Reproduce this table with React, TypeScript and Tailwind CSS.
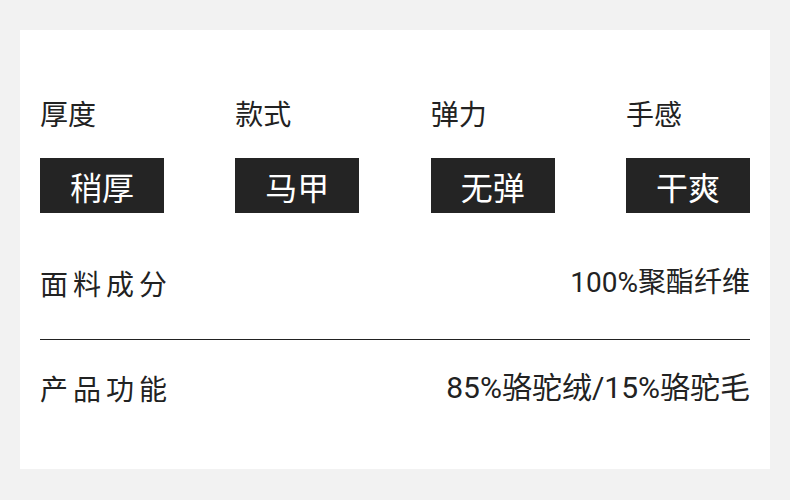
import React from 'react';

const specs = [
  { label: '厚度', value: '稍厚' },
  { label: '款式', value: '马甲' },
  { label: '弹力', value: '无弹' },
  { label: '手感', value: '干爽' },
];

const App: React.FC = () => {
  return (
    <div
      className="w-[790px] h-[500px] bg-[#f2f2f2] pt-[30px] px-[20px] text-[#222]"
      style={{ fontFamily: '"Noto Sans CJK SC", "Noto Sans", sans-serif' }}
    >
      <div className="bg-white h-[439px] px-[20px] pt-[69px]">
        <div className="flex justify-between">
          {specs.map((s) => (
            <div key={s.label} className="w-[124px]">
              <div className="text-[28px] leading-none">{s.label}</div>
              <div className="mt-[31px] h-[55px] bg-[#242424] text-white text-[32px] leading-none flex items-center justify-center">
                {s.value}
              </div>
            </div>
          ))}
        </div>

        <div className="flex justify-between items-center h-[114px] mt-[13px] border-b border-[#222]">
          <span className="text-[28px] leading-none tracking-[5px]">面料成分</span>
          <span className="text-[28px] leading-none font-['Roboto','Noto_Sans_CJK_SC',sans-serif]">100%聚酯纤维</span>
        </div>

        <div className="flex justify-between items-center h-[96px]">
          <span className="text-[28px] leading-none tracking-[5px]">产品功能</span>
          <span className="text-[30px] leading-none font-['Roboto','Noto_Sans_CJK_SC',sans-serif]">85%骆驼绒/15%骆驼毛</span>
        </div>
      </div>
    </div>
  );
};

export default App;
